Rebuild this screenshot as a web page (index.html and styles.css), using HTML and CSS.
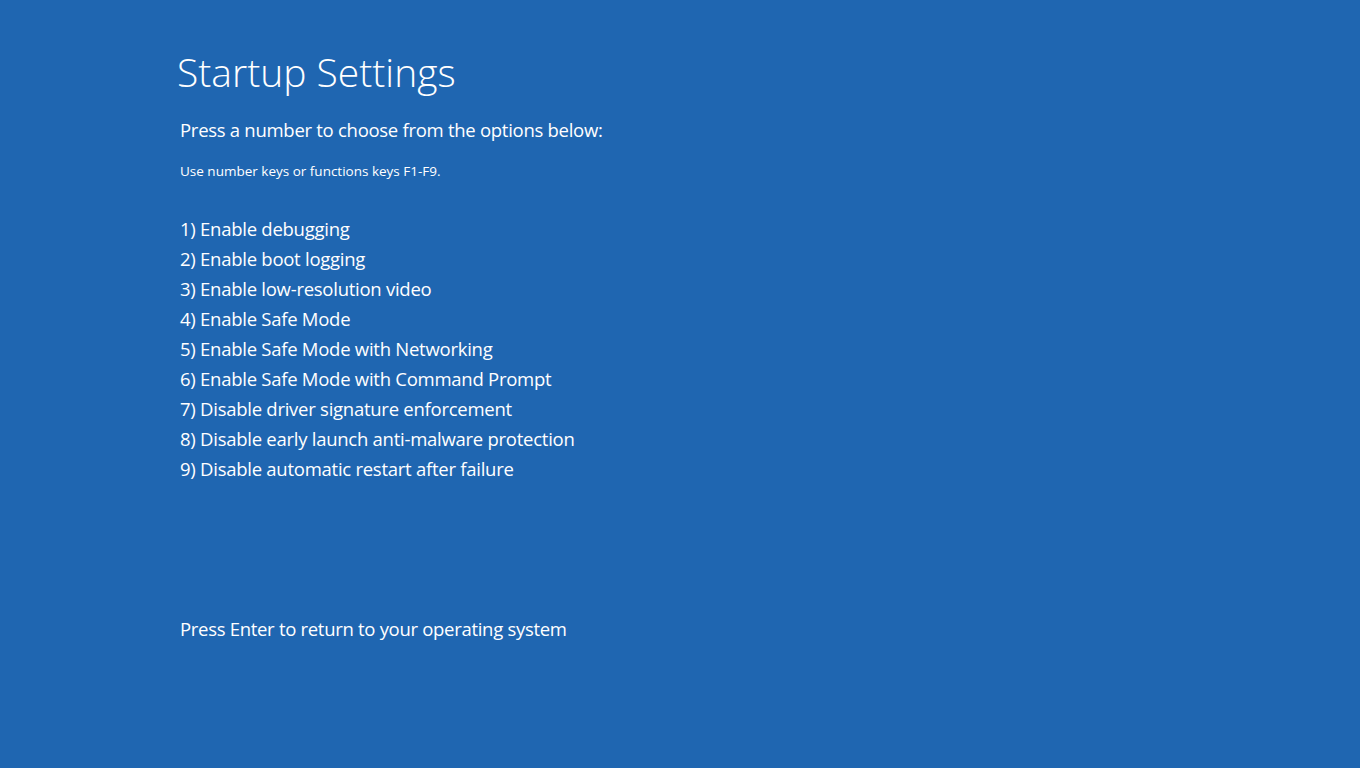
FILE: index.html
```html
<!DOCTYPE html>
<html lang="en">
<head>
<meta charset="utf-8">
<title>Startup Settings</title>
<link rel="stylesheet" href="styles.css">
</head>
<body>
<main class="screen">
  <h1 class="title">Startup Settings</h1>
  <p class="lead">Press a number to choose from the options below:</p>
  <p class="hint">Use number keys or functions keys F1-F9.</p>
  <ol class="options">
    <li>1) Enable debugging</li>
    <li>2) Enable boot logging</li>
    <li>3) Enable low-resolution video</li>
    <li>4) Enable Safe Mode</li>
    <li>5) Enable Safe Mode with Networking</li>
    <li>6) Enable Safe Mode with Command Prompt</li>
    <li>7) Disable driver signature enforcement</li>
    <li>8) Disable early launch anti-malware protection</li>
    <li>9) Disable automatic restart after failure</li>
  </ol>
  <p class="footer">Press Enter to return to your operating system</p>
</main>
</body>
</html>
```
FILE: styles.css
```css
html, body {
  margin: 0;
  padding: 0;
  height: 100%;
}
body {
  background: #1f66b1;
  color: #ffffff;
  font-family: "Open Sans", "Noto Sans", sans-serif;
}
.screen {
  display: flex;
  flex-direction: column;
  padding: 46px 0 0 180px;
}
.title {
  margin: 0 0 0 -3px;
  font-size: 39px;
  font-weight: 300;
  line-height: 52px;
  letter-spacing: 0;
}
.lead {
  margin: 19px 0 0;
  font-size: 18.5px;
  line-height: 26px;
  letter-spacing: -0.28px;
}
.hint {
  margin: 18px 0 0;
  font-size: 13.5px;
  line-height: 20px;
}
.options {
  list-style: none;
  margin: 33px 0 0;
  padding: 0;
  font-size: 18.5px;
  line-height: 30px;
  letter-spacing: -0.26px;
}
.footer {
  margin: 130px 0 0;
  font-size: 18.5px;
  line-height: 30px;
  letter-spacing: -0.3px;
}
```
